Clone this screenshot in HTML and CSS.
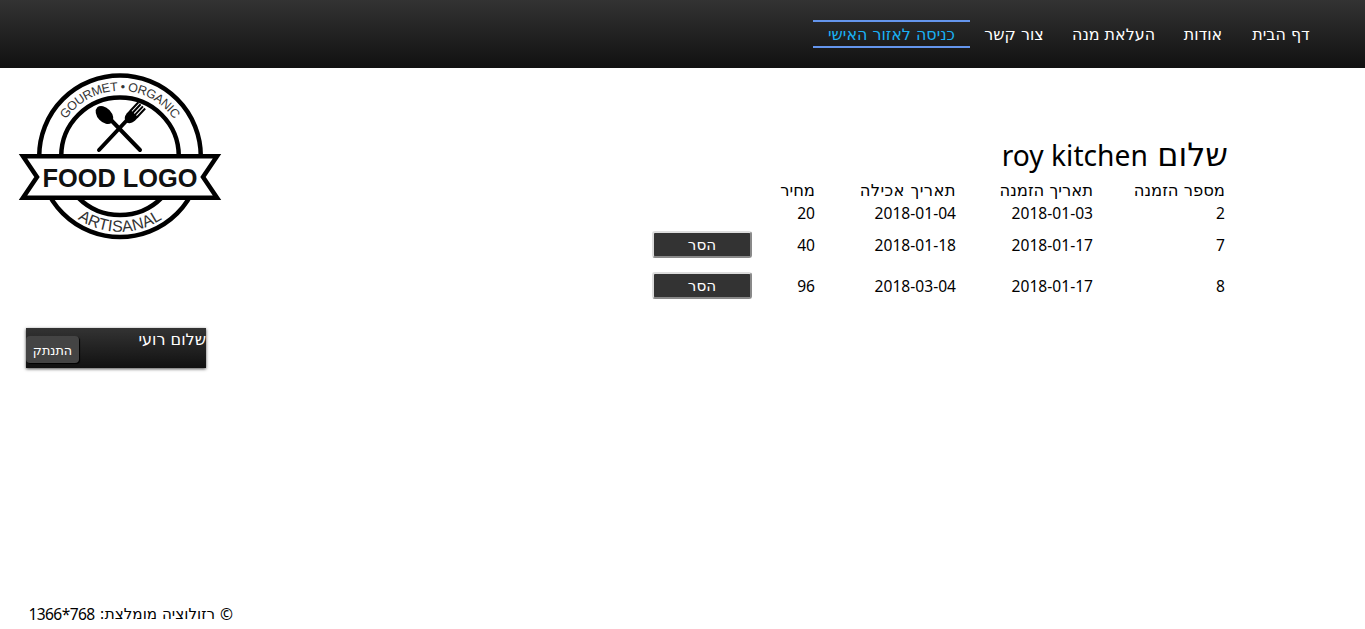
FILE: index.html
```
<!DOCTYPE html>
<html lang="he" dir="rtl">
<head>
<meta charset="utf-8">
<title>roy kitchen</title>
<link rel="stylesheet" href="styles.css">
</head>
<body>
<header class="topbar">
  <nav class="menu">
    <a class="menu-item home"><span>דף הבית</span></a>
    <a class="menu-item about"><span>אודות</span></a>
    <a class="menu-item upload"><span>העלאת מנה</span></a>
    <a class="menu-item contact"><span>צור קשר</span></a>
    <a class="menu-item personal active"><span>כניסה לאזור האישי</span></a>
  </nav>
</header>
<div class="page">
  <main class="orders">
    <h1 class="greeting"><span class="hello">שלום</span> <span>roy kitchen</span></h1>
    <div class="table">
      <div class="row head"><span>מספר הזמנה</span><span>תאריך הזמנה</span><span class="eaten">תאריך אכילה</span><span>מחיר</span></div>
      <div class="row first"><span>2</span><span>2018-01-03</span><span>2018-01-04</span><span>20</span></div>
      <div class="row"><span>7</span><span>2018-01-17</span><span>2018-01-18</span><span>40</span><button class="remove">הסר</button></div>
      <div class="row"><span>8</span><span>2018-01-17</span><span>2018-03-04</span><span>96</span><button class="remove">הסר</button></div>
    </div>
  </main>
  <aside class="side">
    <svg class="logo" viewBox="10 68 220 176" direction="ltr">
      <defs>
        <path id="arc-top" d="M54.500 156.300A65.500 65.500 0 0 1 185.500 156.300"/>
        <path id="arc-bottom" d="M44.500 156.300A75.500 75.500 0 0 0 195.500 156.300"/>
      </defs>
      <circle class="ring" cx="120" cy="156.300" r="80.800"/>
      <circle class="ring" cx="120" cy="156.300" r="58.800"/>
      <path class="ribbon" d="M23 156.200H217L203 177L217 197.800H23L37 177Z"/>
      <text class="logo-name" x="120" y="186.500" textLength="155" lengthAdjust="spacingAndGlyphs">FOOD LOGO</text>
      <text class="logo-arc"><textPath href="#arc-top" startOffset="50%" textLength="127">GOURMET • ORGANIC</textPath></text>
      <text class="logo-arc low"><textPath href="#arc-bottom" startOffset="50%" textLength="90">ARTISANAL</textPath></text>
      <path class="handle" d="M110 119L140 150M129 118L99 150"/>
      <ellipse cx="104.500" cy="115" rx="7" ry="10.500" transform="rotate(-43 104.500 115)"/>
      <g transform="translate(129.500 118.500) rotate(43)">
        <path d="M-5.500 -7H5.500V-2Q5 4 0 5Q-5 4 -5.500 -2Z"/>
        <path class="tines" d="M-4.600 -6V-18M-1.550 -6V-18M1.550 -6V-18M4.600 -6V-18"/>
      </g>
    </svg>
    <div class="userbox"><span class="user">שלום רועי</span><button class="logout">התנתק</button></div>
  </aside>
</div>
<footer class="footer"><span>©</span><span class="note">רזולוציה מומלצת:</span><span class="res" dir="ltr">1366*768</span></footer>
</body>
</html>
```
FILE: styles.css
```
* { box-sizing: border-box; }
body {
  margin: 0;
  height: 629px;
  overflow: hidden;
  display: flex;
  flex-direction: column;
  background: #fff;
  color: #000;
  font: 15.6px/20px "Noto Sans", "Open Sans", sans-serif;
}
button { margin: 0; color: #fff; }
.menu, .hello, .head, .remove, .user, .logout, .note { font-family: "DejaVu Sans", sans-serif; }
.topbar {
  height: 68px;
  padding: 20px 40px 0;
  background: linear-gradient(#333, #111);
}
.menu { display: flex; font-size: 15.9px; }
.menu-item {
  height: 28px;
  padding-top: 2px;
  display: flex;
  justify-content: center;
  align-items: center;
  color: #fff;
  white-space: nowrap;
}
.home, .contact { width: 88px; }
.about { width: 68px; }
.upload { width: 111px; }
.personal { width: 157px; }
.active {
  color: #1ab2f5;
  border-top: 2px solid #6495ed;
  border-bottom: 2px solid #6495ed;
}
.page { flex: 1; display: flex; justify-content: space-between; }
.orders { padding: 66px 137px 0 0; }
.greeting {
  margin: 0;
  height: 45px;
  font-size: 28.2px;
  line-height: 42px;
  font-weight: 400;
  white-space: nowrap;
}
.hello { font-size: 32px; margin-left: 2px; }
.table { padding-right: 3px; }
.row {
  display: grid;
  grid-template-columns: 132px 137px 141px 63px 100px;
  align-items: center;
  height: 41px;
  white-space: nowrap;
}
.row.head { height: 23px; font-size: 16.4px; line-height: 20px; }
.row .eaten { letter-spacing: .4px; }
.row.first { height: 22px; }
.remove {
  width: 100px;
  height: 27px;
  padding: 0;
  background: #333;
  border: 2px outset #ddd;
  border-radius: 3px;
  font-size: 15.2px;
  line-height: 20px;
}
.side { width: 230px; }
.logo { display: block; width: 220px; height: 176px; }
.ring { fill: none; stroke: #000; stroke-width: 4.5; }
.ribbon { fill: #fff; stroke: #000; stroke-width: 4.5; stroke-miterlimit: 4; }
.logo-name { font: bold 26px "Liberation Sans", sans-serif; text-anchor: middle; fill: #111; }
.logo-arc { font: 12.5px "Liberation Sans", sans-serif; text-anchor: middle; fill: #333; }
.low { font-size: 16px; }
.handle { stroke: #000; stroke-width: 4; stroke-linecap: round; }
.tines { stroke: #000; stroke-width: 2; }
.userbox {
  width: 180px;
  height: 40px;
  margin: 84px 24px 0 0;
  display: flex;
  justify-content: space-between;
  background: linear-gradient(#333, #111);
  box-shadow: 0 1px 3px rgba(0, 0, 0, .7);
  color: #fff;
}
.user { padding-top: 2px; font-size: 16px; }
.logout {
  width: 53px;
  height: 27px;
  margin-top: 8px;
  padding: 1px 0 0;
  border: 0;
  border-radius: 4px;
  background: #444;
  box-shadow: 1px 1px 1px #000;
  font-size: 12.8px;
}
.footer {
  height: 25px;
  width: 207px;
  margin-right: auto;
  margin-left: 26px;
  display: flex;
  gap: 5px;
  white-space: nowrap;
}
.note { font-size: 15.2px; }
.res { letter-spacing: -.6px; }
```
